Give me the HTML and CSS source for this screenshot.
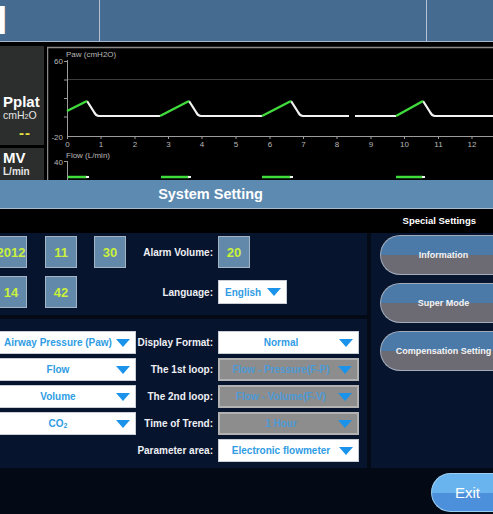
FILE: index.html
```html
<!DOCTYPE html>
<html lang="en">
<head>
    <meta charset="UTF-8">
    <meta name="viewport" content="width=device-width, initial-scale=1.0">
    <title>System Setting</title>
    <link rel="stylesheet" href="styles.css">
</head>
<body>
    <div class="topbar">
        <div class="top-cell first"><span class="mode-text">M</span></div>
        <div class="top-cell middle"></div>
        <div class="top-cell"></div>
    </div>

    <div class="monitor">
        <div class="params">
            <div class="param pplat">
                <div class="param-name">Pplat</div>
                <div class="param-unit">cmH<sub>2</sub>O</div>
                <div class="param-value">--</div>
            </div>
            <div class="param mv">
                <div class="param-name">MV</div>
                <div class="param-unit">L/min</div>
                <div class="param-value green">- -</div>
            </div>
        </div>
        <div class="graph">
            <svg class="wave" width="446" height="134" viewBox="47 46 446 134">
                <path d="M47.5 180 V47.5 H493" stroke="#8a8a8a" stroke-width="1.5" fill="none"/>
                <line x1="67" y1="79.5" x2="493" y2="79.5" stroke="#3c3c3c"/>
                <path class="axis-line" d="M67.5 60 V136.5 H493 M64 61.5 H67 M64 80 H67 M64 98.5 H67 M64 117 H67
                    M67.5 136 v3 M101 136 v3 M135 136 v3 M168.5 136 v3 M202 136 v3 M236 136 v3 M270 136 v3
                    M303.5 136 v3 M337 136 v3 M371 136 v3 M404.5 136 v3 M438.5 136 v3 M472 136 v3
                    M67.5 161 V180 M64 161.5 H67"/>
                <g class="axis-text">
                    <text x="66" y="57">Paw (cmH2O)</text>
                    <text x="63" y="64" text-anchor="end">60</text>
                    <text x="63" y="139.5" text-anchor="end">-20</text>
                    <text x="67.5" y="147" text-anchor="middle">0</text>
                    <text x="101" y="147" text-anchor="middle">1</text>
                    <text x="135" y="147" text-anchor="middle">2</text>
                    <text x="168.5" y="147" text-anchor="middle">3</text>
                    <text x="202" y="147" text-anchor="middle">4</text>
                    <text x="236" y="147" text-anchor="middle">5</text>
                    <text x="270" y="147" text-anchor="middle">6</text>
                    <text x="303.5" y="147" text-anchor="middle">7</text>
                    <text x="337" y="147" text-anchor="middle">8</text>
                    <text x="371" y="147" text-anchor="middle">9</text>
                    <text x="404.5" y="147" text-anchor="middle">10</text>
                    <text x="438.5" y="147" text-anchor="middle">11</text>
                    <text x="472" y="147" text-anchor="middle">12</text>
                    <text x="66" y="158">Flow (L/min)</text>
                    <text x="63" y="164.5" text-anchor="end">40</text>
                </g>
                <path class="trace-white" d="M87 101 L94 112 Q96 116 99 116 H160
                    M189 101 L196 112 Q198 116 201 116 H262
                    M291 101 L298 112 Q300 116 303 116 H349
                    M355 116 H396
                    M423 101 L430 112 Q432 116 435 116 H493"/>
                <path class="trace-green" d="M67 111 L87 101 M160 116 L189 101 M262 116 L291 101 M396 116 L423 101"/>
                <path class="trace-green" d="M68 177 H87 M161 177 H189 M262 177 H291 M396 177 H423"/>
                <path class="trace-white" d="M86 177 H89 M188 177 H191 M290 177 H293 M422 177 H425"/>
            </svg>
        </div>
    </div>

    <div class="dlg-title">System Setting</div>
    <div class="dlg-sub">Special Settings</div>

    <div class="dlg-body">
        <div class="left-col">
            <div class="panel panel-top">
                <div class="dates">
                    <div class="date-row">
                        <div class="num">2012</div>
                        <div class="num">11</div>
                        <div class="num">30</div>
                        <div class="field-label">Alarm Volume:</div>
                        <div class="slot"><div class="num">20</div></div>
                    </div>
                    <div class="date-row">
                        <div class="num">14</div>
                        <div class="num">42</div>
                        <div class="field-label">Language:</div>
                        <div class="slot">
                            <div class="select lang"><span>English</span><i class="caret"></i></div>
                        </div>
                    </div>
                </div>
            </div>

            <div class="panel panel-bottom">
                <div class="display-grid">
                    <div class="select"><span>Airway Pressure (Paw)</span><i class="caret"></i></div>
                    <div class="field-label">Display Format:</div>
                    <div class="select"><span>Normal</span><i class="caret"></i></div>

                    <div class="select"><span>Flow</span><i class="caret"></i></div>
                    <div class="field-label">The 1st loop:</div>
                    <div class="select off"><span>Flow - Pressure(F-P)</span><i class="caret"></i></div>

                    <div class="select"><span>Volume</span><i class="caret"></i></div>
                    <div class="field-label">The 2nd loop:</div>
                    <div class="select off"><span>Flow - Volume(F-V)</span><i class="caret"></i></div>

                    <div class="select"><span>CO<sub>2</sub></span><i class="caret"></i></div>
                    <div class="field-label">Time of Trend:</div>
                    <div class="select off"><span>1 Hour</span><i class="caret"></i></div>

                    <div></div>
                    <div class="field-label">Parameter area:</div>
                    <div class="select"><span>Electronic flowmeter</span><i class="caret"></i></div>
                </div>
            </div>
        </div>

        <div class="panel right-col">
            <button class="pill-button">Information</button>
            <button class="pill-button">Super Mode</button>
            <button class="pill-button">Compensation Setting</button>
        </div>
    </div>

    <div class="dlg-footer">
        <button class="exit-button">Exit</button>
    </div>
</body>
</html>
```

FILE: styles.css
```css
html, body {
    overflow: hidden;
}

body {
    margin: 0;
    width: 493px;
    height: 514px;
    background-color: #030a16;
    font-family: "Liberation Sans", Arial, sans-serif;
    color: #fff;
}

/* top status bar */
.topbar {
    display: flex;
    height: 41px;
    background-color: #466b91;
    border-bottom: 1px solid #a9b8c8;
}

.top-cell {
    height: 41px;
    overflow: hidden;
}

.top-cell.first {
    width: 99px;
    border-right: 1px solid #b4c2d2;
}

.top-cell.middle {
    width: 326px;
    border-right: 1px solid #b4c2d2;
}

.mode-text {
    display: block;
    margin-left: -26px;
    font-weight: bold;
    font-size: 40px;
    line-height: 41px;
}

/* waveform monitor */
.monitor {
    display: flex;
    gap: 3px;
    height: 134px;
    padding-top: 4px;
    background-color: #000;
}

.params {
    width: 44px;
    display: flex;
    flex-direction: column;
    gap: 3px;
}

.param {
    background-color: #2c2e2d;
    padding-left: 3px;
    overflow: hidden;
}

.pplat {
    height: 99px;
    box-sizing: border-box;
    padding-top: 47px;
}

.mv {
    flex: 1;
    padding-top: 2px;
}

.param-name {
    font-weight: bold;
    font-size: 15px;
    line-height: 17px;
}

.mv .param-name {
    line-height: 16px;
}

.param-unit {
    font-size: 10.5px;
    line-height: 11px;
    color: #e6e6e6;
}

.mv .param-unit {
    font-weight: bold;
    font-size: 10px;
}

.param-unit sub {
    font-size: 7px;
    vertical-align: 0;
}

.param-value {
    padding: 4px 0 0 16px;
    font-weight: bold;
    font-size: 15px;
    line-height: 14px;
    letter-spacing: 1px;
    color: #e7e23f;
}

.param-value.green {
    padding-top: 4px;
    color: #54d24a;
}

.graph {
    flex: 1;
}

.wave {
    display: block;
}

.axis-line {
    stroke: #9c9c9c;
    stroke-width: 1;
    fill: none;
}

.axis-text text {
    font-family: "Liberation Sans", Arial, sans-serif;
    font-size: 8px;
    fill: #b8b8b8;
}

.trace-white {
    stroke: #f2f2f2;
    stroke-width: 2.2;
    fill: none;
}

.trace-green {
    stroke: #3fdc3c;
    stroke-width: 2.4;
    fill: none;
}

/* dialog */
.dlg-title {
    height: 28px;
    line-height: 28px;
    padding-right: 72px;
    text-align: center;
    background-color: #5c8ab1;
    border-bottom: 1px solid #a8bccf;
    font-weight: bold;
    font-size: 14.5px;
}

.dlg-sub {
    height: 24px;
    line-height: 23px;
    padding-right: 17px;
    text-align: right;
    background-color: #000;
    font-weight: bold;
    font-size: 9.5px;
}

.dlg-body {
    display: grid;
    grid-template-columns: 367px 1fr;
    gap: 4px;
    height: 235px;
}

.left-col {
    display: flex;
    flex-direction: column;
    gap: 4px;
}

.panel {
    background-color: #07142e;
}

.panel-top {
    height: 82px;
    box-sizing: border-box;
    padding: 3px 80px 0 0;
}

.dates {
    margin-left: -5px;
    display: flex;
    flex-direction: column;
    gap: 8px;
}

.date-row {
    display: flex;
    align-items: center;
    gap: 17px;
}

.date-row .num:nth-child(2) {
    margin-left: 1px;
}

.date-row .field-label {
    margin-left: auto;
}

.slot {
    width: 69px;
    margin-left: -12px;
}

.num {
    width: 32px;
    height: 32px;
    box-sizing: border-box;
    display: flex;
    align-items: center;
    justify-content: center;
    background-color: #6289a9;
    border: 1px solid #a5b5c5;
    color: #c9f03c;
    font-weight: bold;
    font-size: 13px;
}

.field-label {
    font-weight: bold;
    font-size: 10px;
    text-align: right;
    white-space: nowrap;
    color: #eef0f4;
}

.panel-bottom {
    flex: 1;
    padding-top: 12px;
}

.display-grid {
    margin-left: -5px;
    display: grid;
    grid-template-columns: 141px 82px 141px;
    grid-auto-rows: 23px;
    row-gap: 4px;
    align-items: center;
}

.display-grid .field-label {
    padding-right: 5px;
}

.select {
    display: flex;
    align-items: center;
    height: 23px;
    box-sizing: border-box;
    padding: 0 5px 0 4px;
    background-color: #fff;
    border: 1px solid #c9ced6;
}

.select span {
    flex: 1;
    text-align: center;
    color: #2f9ce4;
    font-weight: bold;
    font-size: 10px;
    white-space: nowrap;
}

.select sub {
    font-size: 7px;
    vertical-align: -1px;
}

.select.lang {
    height: 24px;
}

.select.lang span {
    text-align: left;
    padding-left: 2px;
}

.select.off {
    background-color: #8d8d8d;
    border: 2px solid #b2b2b2;
}

.select.off span {
    color: #4c9ad6;
}

.caret {
    width: 0;
    height: 0;
    border-left: 7.5px solid transparent;
    border-right: 7.5px solid transparent;
    border-top: 8px solid #1b93ea;
}

.right-col {
    display: flex;
    flex-direction: column;
    gap: 8px;
    padding-top: 2px;
    overflow: hidden;
}

.pill-button {
    flex: none;
    width: 126px;
    height: 40px;
    margin-left: 9px;
    border: 1px solid #a3acba;
    border-right: none;
    border-radius: 20px 0 0 20px;
    background: linear-gradient(#4b7aa8 50%, #6c6a73 50%);
    color: #f4f4f4;
    font-family: "Liberation Sans", Arial, sans-serif;
    font-weight: bold;
    font-size: 9px;
    white-space: nowrap;
    cursor: pointer;
}

/* footer */
.dlg-footer {
    display: flex;
    justify-content: flex-end;
    padding-top: 5px;
}

.exit-button {
    width: 72px;
    height: 39px;
    margin-right: -10px;
    border: 1px solid #9ccff2;
    border-right: none;
    border-radius: 20px 0 0 20px;
    background: linear-gradient(#69b3ee 50%, #4c90db 50%);
    color: #fff;
    font-family: "Liberation Sans", Arial, sans-serif;
    font-size: 15px;
    cursor: pointer;
}
```
